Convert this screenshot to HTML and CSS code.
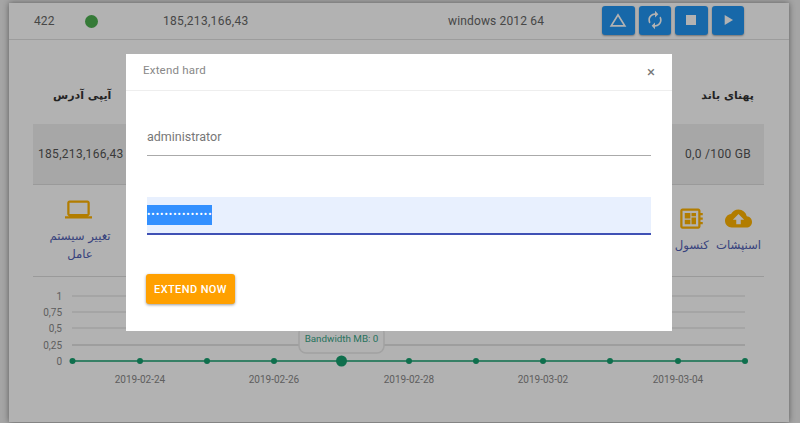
FILE: index.html
```html
<!DOCTYPE html>
<html lang="en">
<head>
<meta charset="utf-8">
<title>Extend hard</title>
<link rel="stylesheet" href="styles.css">
</head>
<body>
<main class="card">
  <header class="server-row">
    <span class="id">422</span>
    <span class="status"></span>
    <span class="ip">185,213,166,43</span>
    <span class="os">windows 2012 64</span>
    <div class="controls">
      <button class="ctl"><svg viewBox="0 0 24 24"><path d="M12 7.77L18.39 18H5.61L12 7.77M12 4L2 20h20L12 4z"/></svg></button>
      <button class="ctl"><svg viewBox="0 0 24 24"><path d="M12 6v3l4-4-4-4v3c-4.42 0-8 3.58-8 8 0 1.57.46 3.03 1.24 4.26L6.7 14.8c-.45-.83-.7-1.79-.7-2.8 0-3.31 2.69-6 6-6zm6.76 1.74L17.3 9.2c.44.84.7 1.79.7 2.8 0 3.31-2.69 6-6 6v-3l-4 4 4 4v-3c4.42 0 8-3.58 8-8 0-1.57-.46-3.03-1.24-4.26z"/></svg></button>
      <button class="ctl"><svg viewBox="0 0 24 24"><path d="M6 6h12v12H6z"/></svg></button>
      <button class="ctl"><svg viewBox="0 0 24 24"><path d="M8 6v12l10-6z"/></svg></button>
    </div>
  </header>

  <section class="specs">
    <div class="spec-heads">
      <span class="fa">آیپی آدرس</span>
      <span class="fa">پهنای باند</span>
    </div>
    <div class="spec-values">
      <span>185,213,166,43</span>
      <span>0,0 /100 GB</span>
    </div>
  </section>

  <nav class="actions">
    <div class="action action-os">
      <svg viewBox="0 0 24 24"><path d="M20 18c1.100 0 2-.9 2-2V6c0-1.100-.9-2-2-2H4c-1.100 0-2 .9-2 2v10c0 1.100.9 2 2 2H0v2h24v-2h-4zM4 6h16v10H4V6z"/></svg>
      <span class="fa">تغییر سیستم عامل</span>
    </div>
    <div class="action-group">
      <div class="action">
        <svg viewBox="0 0 24 24"><path d="M22 9V7h-2V5c0-1.100-.9-2-2-2H4c-1.100 0-2 .9-2 2v14c0 1.100.9 2 2 2h14c1.100 0 2-.9 2-2v-2h2v-2h-2v-2h2v-2h-2V9h2zm-4 10H4V5h14v14zM6 13h5v4H6zm6-6h4v3h-4zM6 7h5v5H6zm6 4h4v6h-4z"/></svg>
        <span class="fa">کنسول</span>
      </div>
      <div class="action">
        <svg viewBox="0 0 24 24"><path d="M19.350 10.040C18.670 6.590 15.640 4 12 4 9.110 4 6.600 5.640 5.350 8.040 2.340 8.360 0 10.910 0 14c0 3.310 2.690 6 6 6h13c2.760 0 5-2.240 5-5 0-2.640-2.050-4.780-4.650-4.960zM14 13v4h-4v-4H7l5-5 5 5h-3z"/></svg>
        <span class="fa">اسنپشات</span>
      </div>
    </div>
  </nav>

  <svg class="chart" viewBox="0 1 780 146" width="780" height="146">
    <g class="grid">
      <line x1="63" x2="736" y1="20" y2="20"/>
      <line x1="63" x2="736" y1="36" y2="36"/>
      <line x1="63" x2="736" y1="52" y2="52"/>
      <line class="grid-strong" x1="63" x2="736" y1="69" y2="69"/>
    </g>
    <g class="y-labels">
      <text x="53" y="24">1</text>
      <text x="53" y="40">0,75</text>
      <text x="53" y="56">0,5</text>
      <text x="53" y="73">0,25</text>
      <text x="53" y="89">0</text>
    </g>
    <rect class="tip" x="290" y="50" width="85" height="27" rx="7"/>
    <text class="tip-text" x="332.500" y="66">Bandwidth MB: 0</text>
    <line class="series" x1="63" x2="736" y1="85" y2="85"/>
    <g class="dots">
      <circle cx="63.500" cy="85" r="3"/>
      <circle cx="131" cy="85" r="3"/>
      <circle cx="198" cy="85" r="3"/>
      <circle cx="265" cy="85" r="3"/>
      <circle cx="332.500" cy="85" r="5.500"/>
      <circle cx="400" cy="85" r="3"/>
      <circle cx="467" cy="85" r="3"/>
      <circle cx="534" cy="85" r="3"/>
      <circle cx="601" cy="85" r="3"/>
      <circle cx="669" cy="85" r="3"/>
      <circle cx="736" cy="85" r="3"/>
    </g>
    <g class="x-labels">
      <text x="131" y="107">2019-02-24</text>
      <text x="265" y="107">2019-02-26</text>
      <text x="400" y="107">2019-02-28</text>
      <text x="534" y="107">2019-03-02</text>
      <text x="669" y="107">2019-03-04</text>
    </g>
  </svg>
</main>

<div class="backdrop"></div>

<div class="modal">
  <div class="modal-head">
    <h2>Extend hard</h2>
    <span class="close">×</span>
  </div>
  <div class="modal-body">
    <div class="field">administrator</div>
    <div class="field field-focus"><span class="selected">•••••••••••••••</span></div>
    <button class="extend">EXTEND NOW</button>
  </div>
</div>
</body>
</html>
```

FILE: styles.css
```css
* { box-sizing: border-box; }
html, body { margin: 0; height: 423px; overflow: hidden; }
body {
  background: #ececec;
  font-family: Roboto, "Liberation Sans", sans-serif;
  color: #555;
  padding: 3px 11px 1px 9px;
}
.fa { font-family: "DejaVu Sans", sans-serif; direction: rtl; }

.card {
  width: 780px;
  height: 419px;
  background: #fff;
  box-shadow: 0 0 6px rgba(0,0,0,.45);
}

.server-row {
  height: 37px;
  display: flex;
  align-items: center;
  border-bottom: 1px solid #e0e0e0;
  font-size: 12px;
  color: #666;
}
.id { margin-left: 25px; width: 51px; letter-spacing: .1px; }
.status { width: 13px; height: 13px; border-radius: 50%; background: #4caf50; margin-top: 1px; }
.ip { margin-left: 65px; width: 285px; letter-spacing: .3px; }
.os { width: 154px; letter-spacing: .15px; }
.controls { display: flex; gap: 4px; margin-top: -2px; }
.ctl {
  width: 32.500px;
  height: 29px;
  border: 0;
  padding: 0;
  border-radius: 3px;
  background: #2196f3;
  display: flex;
  align-items: center;
  justify-content: center;
  box-shadow: 0 1px 2px rgba(0,0,0,.35);
}
.ctl svg { width: 20px; height: 20px; fill: #fff; }

.specs { padding: 0 25px 0 24px; }
.spec-heads {
  height: 84px;
  display: flex;
  justify-content: space-between;
  align-items: flex-start;
  padding: 49px 10px 0 20px;
  font-size: 11px;
  font-weight: bold;
  color: #333;
}
.spec-values {
  height: 61px;
  display: flex;
  justify-content: space-between;
  align-items: center;
  background: #f0f0f0;
  border-bottom: 1px solid #ddd;
  padding: 0 13px 0 5px;
  font-size: 12px;
  letter-spacing: .3px;
  color: #555;
}

.actions {
  margin: 0 25px 0 24px;
  height: 92px;
  padding-bottom: 2px;
  border-bottom: 1px solid #ddd;
  display: flex;
  justify-content: space-between;
  align-items: center;
  color: #5060b4;
}
.action {
  display: flex;
  flex-direction: column;
  align-items: center;
  font-size: 11.700px;
  line-height: 18px;
  text-align: center;
}
.action svg { width: 27px; height: 27px; fill: #ffb300; margin-bottom: 4px; flex: none; }
.action-os { width: 70px; margin-left: 12px; }
.action-os svg { margin-right: 4px; }
.action-group { display: flex; gap: 7px; margin-right: 3px; }

.chart { display: block; }
.grid line { stroke: #dadada; stroke-width: 1; }
.grid .grid-strong { stroke-width: 1.500; }
.y-labels text { font-size: 10px; fill: #888; text-anchor: end; }
.x-labels text { font-size: 10px; fill: #888; text-anchor: middle; }
.series { stroke: #16a06f; stroke-width: 1.500; }
.dots circle { fill: #16a06f; }
.tip { fill: #fff; stroke: #e8e8e8; stroke-width: 1.500; }
.tip-text { font-size: 9.800px; fill: #3aa688; text-anchor: middle; }

.backdrop {
  position: fixed;
  inset: 0;
  background: rgba(0,0,0,.3);
}

.modal {
  position: fixed;
  left: 126px;
  top: 54px;
  width: 546px;
  height: 277px;
  background: #fff;
}
.modal-head {
  height: 37px;
  padding: 0 17px 4px 17px;
  border-bottom: 1px solid #eee;
  display: flex;
  justify-content: space-between;
  align-items: center;
}
.modal-head h2 {
  margin: 0;
  font-size: 11.500px;
  font-weight: 400;
  color: #888;
  letter-spacing: .2px;
}
.close { font-size: 15px; font-weight: 400; color: #777; margin-top: 4px; }
.modal-body { padding: 27px 21px 0 21px; }
.field {
  height: 38px;
  padding-top: 11px;
  font-size: 12.500px;
  color: #777;
  border-bottom: 1px solid #aaa;
}
.field-focus {
  margin-top: 41px;
  height: 38px;
  padding-top: 8px;
  background: #e8f0fe;
  border-bottom: 2px solid #3f51b5;
}
.selected {
  display: block;
  width: 65px;
  height: 20px;
  background: #3390ff;
  color: #fff;
  font-size: 10px;
  line-height: 20px;
  white-space: nowrap;
  overflow: hidden;
  letter-spacing: 1px;
}
.extend {
  display: block;
  margin: 39px 0 0 -1px;
  width: 89px;
  height: 30px;
  border: 0;
  border-radius: 3px;
  background: #ffa000;
  color: #fff;
  font: 500 11px Roboto, sans-serif;
  letter-spacing: .4px;
  box-shadow: 0 1px 3px rgba(0,0,0,.4);
}
```
